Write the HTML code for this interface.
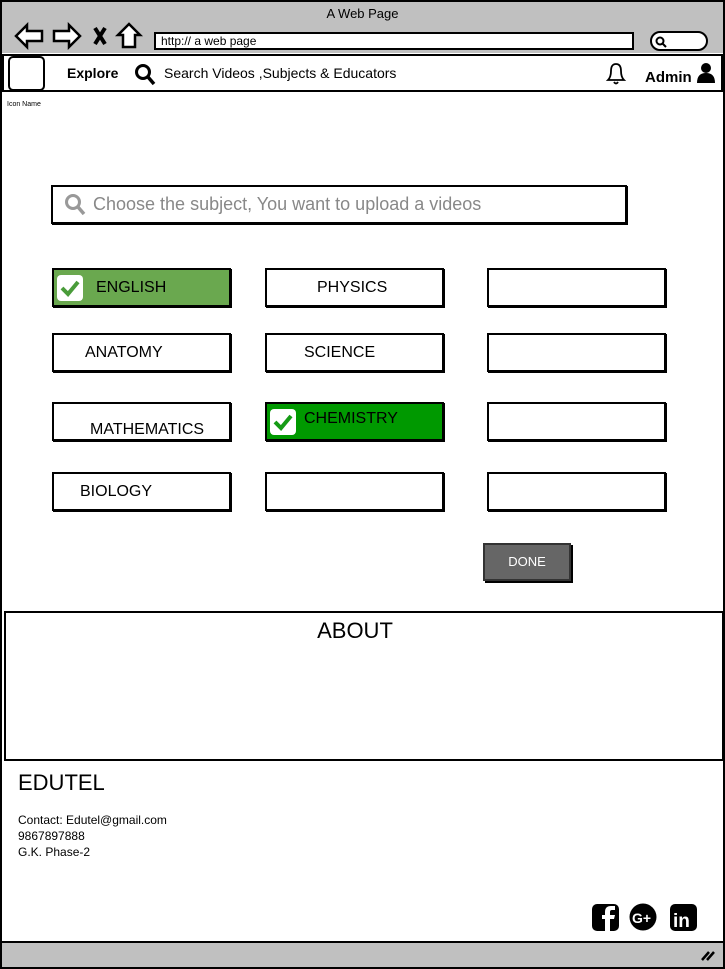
<!DOCTYPE html>
<html><head><meta charset="utf-8"><style>
*{box-sizing:border-box;margin:0;padding:0}
body{width:725px;height:969px;position:relative;background:#fff;font-family:"Liberation Sans",sans-serif;overflow:hidden;color:#000}
.a{position:absolute}
.b{position:absolute;border:2px solid #000;background:#fff}
.box{position:absolute;border:2px solid #000;background:#fff;width:179px;height:39px;font-size:16px;line-height:35px;box-shadow:1px 1px 0 #000}
.chk{position:absolute;left:3px;top:5px;width:26px;height:26px;background:#fff;border-radius:4px}
</style></head><body>
<div class="a" style="left:0;top:0;width:725px;height:969px;border:2px solid #000"></div>
<div class="a" style="left:2px;top:2px;width:721px;height:51px;background:#c0c0c0"></div>
<div class="a" style="left:0;top:6px;width:725px;text-align:center;font-size:13px">A Web Page</div>
<svg class="a" style="left:14px;top:22px" width="130" height="28" viewBox="0 0 130 28" fill="none" stroke="#000" stroke-width="2.5">
<path d="M2 14 L13 3 V9 H28 V19 H13 V25 Z" fill="#fff"/>
<path d="M66 14 L55 3 V9 H40 V19 H55 V25 Z" fill="#fff"/>
<path d="M81 6 L91 22 M91 6 L81 22" stroke-width="4"/>
<path d="M104 13 L115 2 L126 13 H121 V25 H109 V13 Z" fill="#fff"/>
</svg>
<div class="b" style="left:154px;top:32px;width:480px;height:18px;font-size:12px;line-height:14px;padding-left:5px">http:// a web page</div>
<div class="b" style="left:650px;top:31px;width:58px;height:20px;border-radius:10px"></div>
<svg class="a" style="left:654px;top:35px" width="14" height="14"><circle cx="6" cy="6" r="3.5" stroke="#000" stroke-width="2" fill="none"/><path d="M8.5 8.5 L12 12" stroke="#000" stroke-width="2"/></svg>
<div class="b" style="left:2px;top:54px;width:721px;height:38px"></div>
<div class="b" style="left:8px;top:56px;width:37px;height:35px;border-radius:5px"></div>
<div class="a" style="left:67px;top:65px;font-size:14px;font-weight:bold">Explore</div>
<svg class="a" style="left:134px;top:63px" width="24" height="24"><circle cx="9" cy="9" r="6.5" stroke="#000" stroke-width="3" fill="none"/><path d="M14 14 L20 21" stroke="#000" stroke-width="3.5"/></svg>
<div class="a" style="left:164px;top:65px;font-size:14px">Search Videos ,Subjects &amp; Educators</div>
<svg class="a" style="left:604px;top:61px" width="24" height="26" fill="none" stroke="#000" stroke-width="1.8"><path d="M4 19 Q7 16 7 10 Q7 3 12 3 Q17 3 17 10 Q17 16 20 19 Z"/><path d="M10 21 Q12 24 14 21"/></svg>
<div class="a" style="left:645px;top:69px;font-size:15px;font-weight:bold">Admin</div>
<svg class="a" style="left:696px;top:62px" width="20" height="22"><circle cx="10" cy="6" r="5"/><path d="M1 21 Q1 11 10 11 Q19 11 19 21 Z"/></svg>
<div class="a" style="left:7px;top:101px;font-size:7px">Icon Name</div>
<div class="b" style="left:51px;top:185px;width:576px;height:39px;box-shadow:1px 1px 0 #000"></div>
<svg class="a" style="left:64px;top:193px" width="24" height="24"><circle cx="9" cy="9" r="6.5" stroke="#999" stroke-width="3" fill="none"/><path d="M14 14 L20 21" stroke="#999" stroke-width="3.5"/></svg>
<div class="a" style="left:93px;top:194px;font-size:18px;color:#888">Choose the subject, You want to upload a videos</div>

<div class="box" style="left:52px;top:268px;background:#6aa84f"><div class="chk"><svg width="26" height="26"><path d="M5 13 L11 19 L21 7" stroke="#4a9c3a" stroke-width="4" fill="none"/></svg></div><span style="position:absolute;left:42px">ENGLISH</span></div>
<div class="box" style="left:265px;top:268px"><span style="position:absolute;left:50px">PHYSICS</span></div>
<div class="box" style="left:487px;top:268px"></div>
<div class="box" style="left:52px;top:333px"><span style="position:absolute;left:31px">ANATOMY</span></div>
<div class="box" style="left:265px;top:333px"><span style="position:absolute;left:37px">SCIENCE</span></div>
<div class="box" style="left:487px;top:333px"></div>
<div class="box" style="left:52px;top:402px"><span style="position:absolute;left:36px;top:8px">MATHEMATICS</span></div>
<div class="box" style="left:265px;top:402px;background:#009900"><div class="chk"><svg width="26" height="26"><path d="M5 13 L11 19 L21 7" stroke="#169b16" stroke-width="4" fill="none"/></svg></div><span style="position:absolute;left:37px;top:-3px">CHEMISTRY</span></div>
<div class="box" style="left:487px;top:402px"></div>
<div class="box" style="left:52px;top:472px"><span style="position:absolute;left:26px">BIOLOGY</span></div>
<div class="box" style="left:265px;top:472px"></div>
<div class="box" style="left:487px;top:472px"></div>

<div class="a" style="left:483px;top:543px;width:88px;height:38px;background:#666;border:2px solid #333;box-shadow:2px 2px 0 #000;color:#fff;font-size:13px;text-align:center;line-height:34px">DONE</div>

<div class="b" style="left:4px;top:611px;width:720px;height:150px"></div>
<div class="a" style="left:0;top:618px;width:710px;text-align:center;font-size:22px">ABOUT</div>
<div class="a" style="left:18px;top:770px;font-size:22px">EDUTEL</div>
<div class="a" style="left:18px;top:812px;font-size:12px;line-height:16px">Contact: Edutel@gmail.com<br>9867897888<br>G.K. Phase-2</div>
<svg class="a" style="left:590px;top:903px" width="110" height="30">
<rect x="2" y="1" width="27" height="27" rx="5"/><path d="M20 28 V16 H24 L25 12 H20 V9 Q20 7 22 7 H25 V3 H21 Q15 3 15 9 V12 H12 V16 H15 V28 Z" fill="#fff"/>
<circle cx="53" cy="14" r="13.5"/><text x="42" y="20" font-size="14" font-weight="bold" fill="#fff" font-family="Liberation Sans">G+</text>
<rect x="80" y="1" width="27" height="27" rx="5"/><text x="83" y="24" font-size="19" font-weight="bold" fill="#fff" font-family="Liberation Sans">in</text>
</svg>
<div class="a" style="left:2px;top:941px;width:721px;height:26px;background:#c0c0c0;border-top:2px solid #000"></div>
<svg class="a" style="left:700px;top:948px" width="16" height="14"><path d="M2 12 L9 4 M7 12 L14 4" stroke="#000" stroke-width="2.5"/></svg>
</body></html>
